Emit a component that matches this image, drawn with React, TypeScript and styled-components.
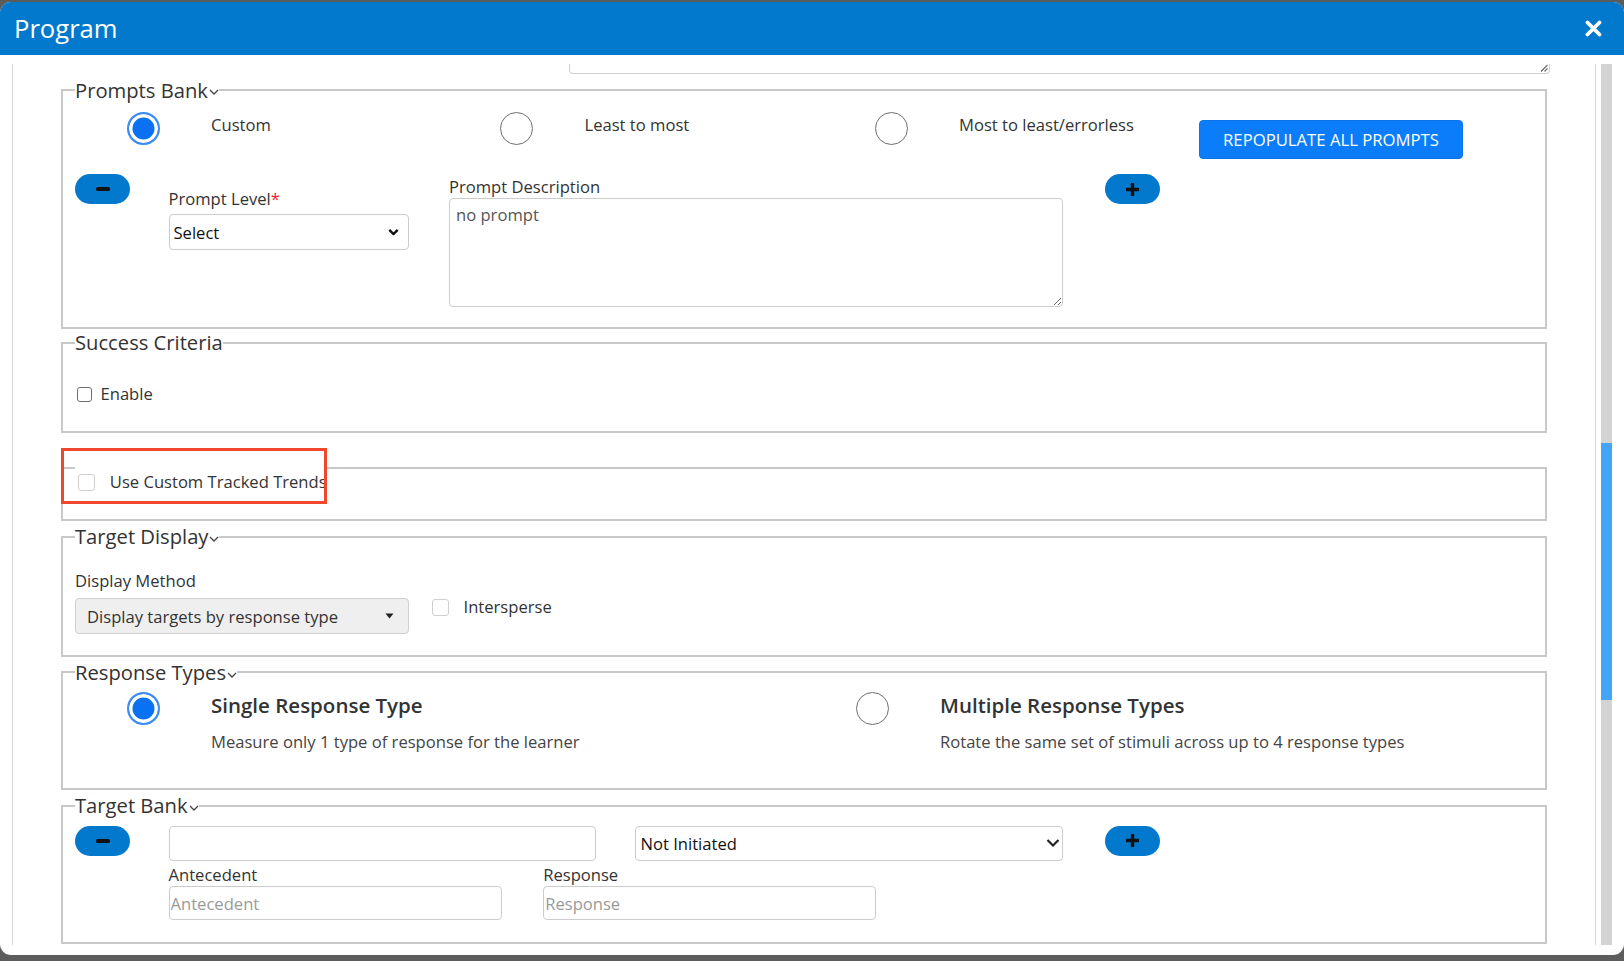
import React from "react";
import styled, { createGlobalStyle } from "styled-components";

const Global = createGlobalStyle`
  html, body { margin: 0; padding: 0; background: #5c5c5c; }
  body { font-family: "Open Sans", "Noto Sans", sans-serif; color: #333; }
  * { box-sizing: border-box; }
`;

const Modal = styled.div`
  margin-top: 2px;
  height: 953px;
  background: #fff;
  border-radius: 11px;
  overflow: hidden;
  display: flex;
  flex-direction: column;
`;

const Header = styled.header`
  height: 53px;
  flex: none;
  background: #0279cc;
  display: flex;
  align-items: center;
  justify-content: space-between;
  padding: 0 22px 0 14px;
`;

const Title = styled.h1`
  margin: 0;
  font-size: 25.6px;
  font-weight: 400;
  line-height: 1;
  color: #fff;
`;

const CloseButton = styled.button`
  border: 0;
  background: none;
  padding: 0;
  width: 17px;
  height: 17px;
  display: flex;
  cursor: pointer;
`;

const Body = styled.div`
  flex: 1;
  min-height: 0;
  display: flex;
  gap: 5px;
  padding: 9px 12px 10px 12px;
`;

const Panel = styled.div`
  flex: 1;
  min-width: 0;
  border-left: 1px solid #d4d4d4;
  border-right: 1px solid #d4d4d4;
  padding: 0 48px;
  overflow: hidden;
`;

const ScrollTrack = styled.div`
  width: 11px;
  flex: none;
  background: #d3d3d3;
`;

const ScrollThumb = styled.div<{ $top: number; $h: number }>`
  margin-top: ${(p) => p.$top}px;
  height: ${(p) => p.$h}px;
  background: #42a5f5;
`;

const TextareaTail = styled.div`
  margin-left: 508px;
  width: 981px;
  height: 9.5px;
  border: 1px solid #cfcfcf;
  border-top: none;
  border-radius: 0 0 4px 4px;
  display: flex;
  justify-content: flex-end;
  align-items: flex-end;
  padding: 0 1px 1px 0;
`;

const Group = styled.fieldset<{ $pb: number; $mt?: number; $mb?: number }>`
  position: relative;
  margin: ${(p) => p.$mt ?? 0}px 0 ${(p) => p.$mb ?? 2}px;
  padding: 0 12px ${(p) => p.$pb}px;
  border: 2px solid #c8c8c8;
  min-width: 0;
`;

const Legend = styled.legend`
  padding: 0;
  font-size: 20.2px;
  line-height: 27px;
  color: #333;
  white-space: nowrap;
`;

const BlankLegend = styled.legend<{ $w: number }>`
  padding: 0;
  width: ${(p) => p.$w}px;
  height: 2px;
  font-size: 0;
  line-height: 0;
`;

const LegendChevron = styled.svg`
  width: 10px;
  height: 6px;
  margin-left: 1px;
  vertical-align: middle;
`;

const Highlight = styled.div`
  position: absolute;
  left: -2px;
  top: -20.5px;
  width: 266px;
  height: 56px;
  border: 3px solid #f1472c;
  pointer-events: none;
`;

const Row = styled.div<{ $mt?: number; $ml?: number }>`
  display: flex;
  align-items: flex-start;
  margin-top: ${(p) => p.$mt ?? 0}px;
  margin-left: ${(p) => p.$ml ?? 0}px;
`;

const RadioOption = styled.label<{ $w: number }>`
  width: ${(p) => p.$w}px;
  flex: none;
  display: flex;
  align-items: flex-start;
  padding-left: 51.5px;
`;

const Radio = styled.input.attrs({ type: "radio" })<{ $mt?: number }>`
  appearance: none;
  margin: ${(p) => p.$mt ?? 0}px 0 0;
  width: 33px;
  height: 33px;
  flex: none;
  border-radius: 50%;
  border: 1.5px solid #6e6e6e;
  background: #fff;
  &:checked {
    border: 2.5px solid #3a8df5;
    background: #0a72f2;
    box-shadow: inset 0 0 0 3.5px #fff;
  }
`;

const RadioText = styled.span`
  margin-left: 51.5px;
  margin-top: 1px;
  font-size: 16.6px;
  line-height: 24px;
  color: #333;
`;

const OptionBody = styled.div`
  margin-left: 51.5px;
  display: flex;
  flex-direction: column;
`;

const OptionTitle = styled.span`
  font-size: 20.5px;
  font-weight: 600;
  line-height: 28px;
  color: #333;
`;

const OptionDesc = styled.span`
  margin-top: 11.3px;
  font-size: 16.6px;
  line-height: 24px;
  color: #444;
`;

const PrimaryButton = styled.button<{ $mt?: number }>`
  margin-top: ${(p) => p.$mt ?? 0}px;
  width: 264px;
  height: 38.5px;
  flex: none;
  border: 1px solid #0a74ec;
  border-radius: 4px;
  background: #0b7dfa;
  color: #fff;
  font-family: "Open Sans", sans-serif;
  font-size: 16.7px;
  text-transform: uppercase;
  padding: 0;
  cursor: pointer;
`;

const PillButton = styled.button<{ $ml?: number }>`
  margin-left: ${(p) => p.$ml ?? 0}px;
  width: 55px;
  height: 30px;
  flex: none;
  border: 0;
  border-radius: 15px;
  background: #0279cc;
  display: flex;
  align-items: center;
  justify-content: center;
  padding: 0;
  cursor: pointer;
`;

const Field = styled.div<{ $ml?: number; $mt?: number; $w: number }>`
  margin-left: ${(p) => p.$ml ?? 0}px;
  margin-top: ${(p) => p.$mt ?? 0}px;
  width: ${(p) => p.$w}px;
  flex: none;
  display: flex;
  flex-direction: column;
`;

const FieldLabel = styled.label<{ $mb?: number }>`
  font-size: 16.6px;
  line-height: 23px;
  color: #333;
  margin-bottom: ${(p) => p.$mb ?? 0}px;
`;

const Required = styled.span`
  color: #e5262b;
`;

const SelectWrap = styled.div<{ $w: number; $ml?: number }>`
  position: relative;
  width: ${(p) => p.$w}px;
  margin-left: ${(p) => p.$ml ?? 0}px;
  flex: none;
`;

const Select = styled.select<{ $h: number; $pl: number; $tone?: "grey" }>`
  appearance: none;
  display: block;
  width: 100%;
  height: ${(p) => p.$h}px;
  border: 1px solid ${(p) => (p.$tone === "grey" ? "#d0d0d0" : "#cccccc")};
  border-radius: 4px;
  background: ${(p) => (p.$tone === "grey" ? "#efefef" : "#fff")};
  padding: 0 30px 0 ${(p) => p.$pl}px;
  font-family: "Open Sans", sans-serif;
  font-size: 16.6px;
  color: ${(p) => (p.$tone === "grey" ? "#333" : "#111")};
  outline: none;
`;

const SelectIcon = styled.svg<{ $right: number }>`
  position: absolute;
  top: 50%;
  right: ${(p) => p.$right}px;
  transform: translateY(-50%);
  pointer-events: none;
`;

const TextInput = styled.input<{ $w: number; $h: number; $ml?: number }>`
  width: ${(p) => p.$w}px;
  height: ${(p) => p.$h}px;
  margin-left: ${(p) => p.$ml ?? 0}px;
  flex: none;
  border: 1px solid #cccccc;
  border-radius: 4px;
  padding: 0 1px;
  font-family: "Open Sans", sans-serif;
  font-size: 16.6px;
  color: #333;
  outline: none;
  &::placeholder {
    color: #9a9a9a;
  }
`;

const TextArea = styled.textarea`
  display: block;
  width: 614px;
  height: 108.6px;
  border: 1px solid #cccccc;
  border-radius: 4px;
  padding: 5px 6px;
  font-family: "Open Sans", sans-serif;
  font-size: 16.6px;
  line-height: 22px;
  color: #555;
  resize: both;
  outline: none;
`;

const CheckRow = styled.label<{ $gap: number; $pl?: number; $ml?: number; $mt?: number }>`
  display: flex;
  align-items: center;
  gap: ${(p) => p.$gap}px;
  padding-left: ${(p) => p.$pl ?? 0}px;
  margin-left: ${(p) => p.$ml ?? 0}px;
  margin-top: ${(p) => p.$mt ?? 0}px;
  font-size: 16.6px;
  line-height: 24px;
  color: #333;
`;

const Checkbox = styled.input.attrs({ type: "checkbox" })<{ $size: number; $border: string }>`
  appearance: none;
  margin: 0;
  flex: none;
  width: ${(p) => p.$size}px;
  height: ${(p) => p.$size}px;
  border: 1px solid ${(p) => p.$border};
  border-radius: 3px;
  background: #fff;
`;

const Chevron = () => (
  <LegendChevron viewBox="0 0 10 6">
    <path d="M1 1 L5 5 L9 1" fill="none" stroke="#444" strokeWidth="1.3" />
  </LegendChevron>
);

const Minus = () => (
  <svg width="14" height="4" viewBox="0 0 14 4">
    <rect x="0" y="0" width="14" height="4" rx="1.5" fill="#111" />
  </svg>
);

const Plus = () => (
  <svg width="13" height="13" viewBox="0 0 13 13">
    <path d="M6.5 1 V12 M1 6.5 H12" stroke="#111" strokeWidth="3.4" strokeLinecap="round" />
  </svg>
);

const Grip = () => (
  <svg width="8" height="8" viewBox="0 0 8 8">
    <path d="M7.5 1 L1 7.5 M7.5 4.5 L4.5 7.5" stroke="#666" strokeWidth="1.1" />
  </svg>
);

export default function App() {
  return (
    <>
      <Global />
      <Modal>
        <Header>
          <Title>Program</Title>
          <CloseButton aria-label="Close">
            <svg width="17" height="17" viewBox="0 0 17 17">
              <path d="M2.5 2.5 L14.5 14.5 M14.5 2.5 L2.5 14.5" stroke="#fff" strokeWidth="3.8" strokeLinecap="round" />
            </svg>
          </CloseButton>
        </Header>
        <Body>
          <Panel>
            <TextareaTail>
              <Grip />
            </TextareaTail>

            <Group $mt={3} $mb={0} $pb={20.7}>
              <Legend>
                Prompts Bank
                <Chevron />
              </Legend>
              <Row $mt={8}>
                <RadioOption $w={373.5}>
                  <Radio name="prompts" defaultChecked />
                  <RadioText>Custom</RadioText>
                </RadioOption>
                <RadioOption $w={374.5}>
                  <Radio name="prompts" />
                  <RadioText>Least to most</RadioText>
                </RadioOption>
                <RadioOption $w={376}>
                  <Radio name="prompts" />
                  <RadioText>Most to least/errorless</RadioText>
                </RadioOption>
                <PrimaryButton $mt={8.5}>Repopulate all prompts</PrimaryButton>
              </Row>
              <Row $mt={15.5}>
                <PillButton aria-label="Remove prompt">
                  <Minus />
                </PillButton>
                <Field $ml={38.5} $mt={12.5} $w={240}>
                  <FieldLabel $mb={4.5}>
                    Prompt Level<Required>*</Required>
                  </FieldLabel>
                  <SelectWrap $w={240}>
                    <Select $h={36} $pl={4} defaultValue="Select">
                      <option>Select</option>
                    </Select>
                    <SelectIcon $right={10} width="11" height="7" viewBox="0 0 11 7">
                      <path d="M1.3 1.3 L5.5 5.5 L9.7 1.3" fill="none" stroke="#111" strokeWidth="2.4" />
                    </SelectIcon>
                  </SelectWrap>
                </Field>
                <Field $ml={40.5} $mt={0.5} $w={614}>
                  <FieldLabel $mb={0.5}>Prompt Description</FieldLabel>
                  <TextArea defaultValue="no prompt" />
                </Field>
                <PillButton $ml={42.3} aria-label="Add prompt">
                  <Plus />
                </PillButton>
              </Row>
            </Group>

            <Group $mb={34} $pb={24.3}>
              <Legend>Success Criteria</Legend>
              <CheckRow $gap={8.5} $pl={2} $mt={26}>
                <Checkbox $size={15} $border="#6f6f6f" />
                Enable
              </CheckRow>
            </Group>

            <Group $pb={25.3}>
              <BlankLegend $w={252} />
              <CheckRow $gap={14.8} $pl={3} $mt={1.6}>
                <Checkbox $size={17} $border="#cfcfcf" />
                Use Custom Tracked Trends
              </CheckRow>
              <Highlight />
            </Group>

            <Group $pb={20.6}>
              <Legend>
                Target Display
                <Chevron />
              </Legend>
              <Row>
                <Field $mt={18.5} $w={333.5}>
                  <FieldLabel $mb={6}>Display Method</FieldLabel>
                  <SelectWrap $w={333.5}>
                    <Select $h={36.4} $pl={11} $tone="grey" defaultValue="type">
                      <option value="type">Display targets by response type</option>
                    </Select>
                    <SelectIcon $right={14.5} width="9" height="6" viewBox="0 0 9 6">
                      <path d="M0.5 0.5 H8.5 L4.5 5.5 Z" fill="#222" />
                    </SelectIcon>
                  </SelectWrap>
                </Field>
                <CheckRow $gap={14.5} $ml={23.5} $mt={45}>
                  <Checkbox $size={17} $border="#cfcfcf" />
                  Intersperse
                </CheckRow>
              </Row>
            </Group>

            <Group $pb={34.6}>
              <Legend>
                Response Types
                <Chevron />
              </Legend>
              <Row $mt={4.6}>
                <RadioOption $w={729}>
                  <Radio name="rtype" $mt={1.7} defaultChecked />
                  <OptionBody>
                    <OptionTitle>Single Response Type</OptionTitle>
                    <OptionDesc>Measure only 1 type of response for the learner</OptionDesc>
                  </OptionBody>
                </RadioOption>
                <RadioOption $w={729}>
                  <Radio name="rtype" $mt={1.7} />
                  <OptionBody>
                    <OptionTitle>Multiple Response Types</OptionTitle>
                    <OptionDesc>Rotate the same set of stimuli across up to 4 response types</OptionDesc>
                  </OptionBody>
                </RadioOption>
              </Row>
            </Group>

            <Group $pb={21.8}>
              <Legend>
                Target Bank
                <Chevron />
              </Legend>
              <Row $mt={6.2}>
                <PillButton aria-label="Remove target">
                  <Minus />
                </PillButton>
                <TextInput $ml={38.5} $w={427.6} $h={35.2} />
                <SelectWrap $w={427.7} $ml={39.4}>
                  <Select $h={35.2} $pl={4} defaultValue="ni">
                    <option value="ni">Not Initiated</option>
                  </Select>
                  <SelectIcon $right={3} width="14" height="9" viewBox="0 0 14 9">
                    <path d="M1.5 1.5 L7 7 L12.5 1.5" fill="none" stroke="#222" strokeWidth="2.2" />
                  </SelectIcon>
                </SelectWrap>
                <PillButton $ml={42.3} aria-label="Add target">
                  <Plus />
                </PillButton>
              </Row>
              <Row $ml={93.5} $mt={2.3}>
                <Field $w={333}>
                  <FieldLabel>Antecedent</FieldLabel>
                  <TextInput $w={333} $h={34.1} placeholder="Antecedent" />
                </Field>
                <Field $ml={41.7} $w={333}>
                  <FieldLabel>Response</FieldLabel>
                  <TextInput $w={333} $h={34.1} placeholder="Response" />
                </Field>
              </Row>
            </Group>
          </Panel>
          <ScrollTrack>
            <ScrollThumb $top={379} $h={257} />
          </ScrollTrack>
        </Body>
      </Modal>
    </>
  );
}
